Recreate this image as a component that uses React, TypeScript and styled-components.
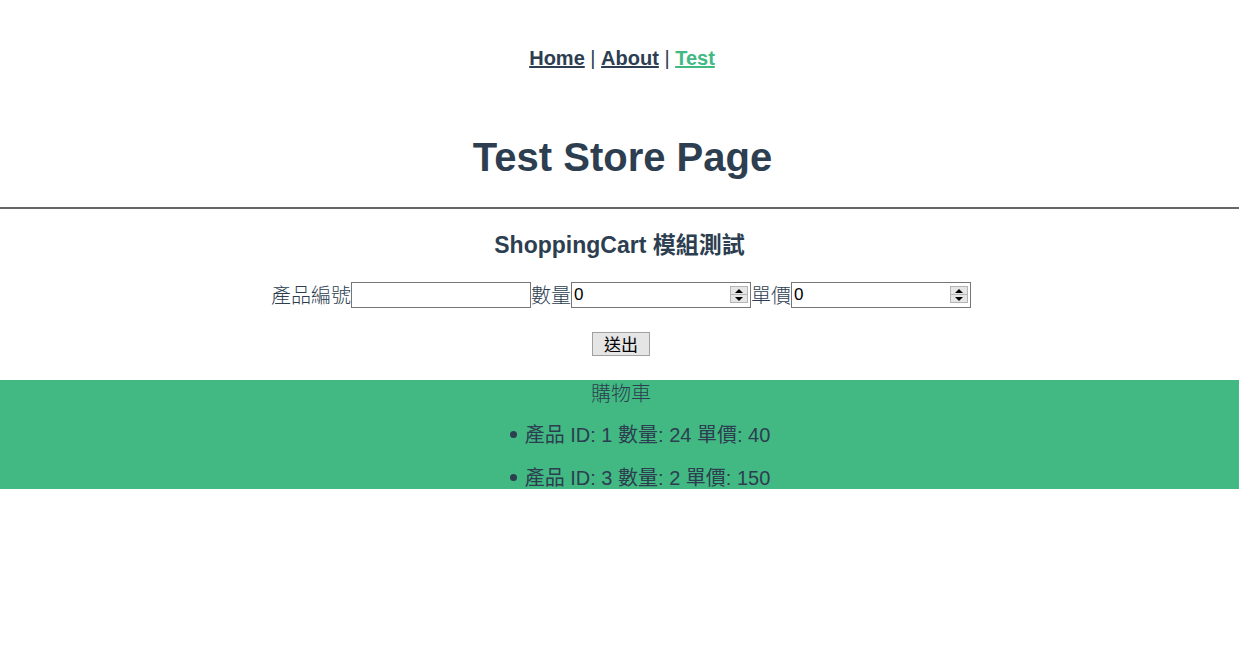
import React from "react";
import styled, { createGlobalStyle } from "styled-components";

const GlobalStyle = createGlobalStyle`
  body {
    margin: 0;
    background: #ffffff;
  }
`;

const AppWrapper = styled.div`
  font-family: Avenir, Helvetica, "Liberation Sans", Arial, "Noto Sans CJK TC", sans-serif;
  -webkit-font-smoothing: antialiased;
  text-align: center;
  color: #2c3e50;
  font-size: 20px;
`;

const Nav = styled.nav`
  padding: 47px 37px 37px 42px;
  line-height: 23px;
  font-size: 20px;
`;

const NavLink = styled.a<{ active?: boolean }>`
  font-weight: bold;
  color: ${(p) => (p.active ? "#42b983" : "#2c3e50")};
  text-decoration: underline;
  cursor: pointer;
`;

const Title = styled.h1`
  font-size: 40px;
  line-height: 46px;
  margin: 27px 0;
  padding-left: 6px;
`;

const Divider = styled.hr`
  margin: 9px 0 0;
  border: none;
  border-top: 2px solid #666666;
  height: 0;
`;

const SubTitle = styled.h3`
  font-size: 23px;
  line-height: 27px;
  margin: 23px 0;
`;

const FormRow = styled.div`
  display: flex;
  justify-content: center;
  align-items: center;
  height: 26px;
  line-height: 26px;
  padding-left: 3px;
`;

const Label = styled.label`
  font-size: 20px;
  font-family: "Noto Sans CJK TC", "Liberation Sans", sans-serif;
  font-weight: 300;
`;

const FieldBox = styled.span`
  position: relative;
  display: flex;
  width: 180px;
  height: 26px;
`;

const Field = styled.input`
  box-sizing: border-box;
  width: 180px;
  height: 26px;
  padding: 1px 2px;
  border: 1px solid #767676;
  border-radius: 0;
  font-family: "Liberation Sans", Arial, sans-serif;
  font-size: 17px;
  color: #000000;
  background: #ffffff;
  outline: none;
  -moz-appearance: textfield;

  &::-webkit-inner-spin-button,
  &::-webkit-outer-spin-button {
    -webkit-appearance: none;
    margin: 0;
  }
`;

const Spinner = styled.span`
  position: absolute;
  right: 3px;
  top: 4px;
  width: 18px;
  height: 17px;
  box-sizing: border-box;
  border: 1px solid #b5b5b5;
  background: #e6e6e6;
  display: flex;
  flex-direction: column;
`;

const SpinHalf = styled.span<{ down?: boolean }>`
  flex: 1;
  display: flex;
  align-items: center;
  justify-content: center;
  border-top: ${(p) => (p.down ? "1px solid #b5b5b5" : "none")};

  &::after {
    content: "";
    width: 0;
    height: 0;
    border-left: 4px solid transparent;
    border-right: 4px solid transparent;
    ${(p) =>
      p.down
        ? "border-top: 4px solid #000;"
        : "border-bottom: 4px solid #000;"}
  }
`;

const ButtonRow = styled.div`
  margin-top: 24px;
  display: flex;
  justify-content: center;
  padding-left: 3px;
`;

const SubmitButton = styled.button`
  box-sizing: border-box;
  width: 58px;
  height: 24px;
  padding: 0;
  background: #e5e5e5;
  border: 1px solid #a0a0a0;
  border-radius: 0;
  font-family: "Noto Sans CJK TC", sans-serif;
  font-size: 17px;
  line-height: 22px;
  color: #000000;
`;

const Cart = styled.div`
  margin-top: 24px;
  height: 109px;
  background: #42b983;
`;

const CartTitle = styled.div`
  font-family: "Noto Sans CJK TC", sans-serif;
  font-weight: 300;
  font-size: 20px;
  line-height: 26px;
  padding-left: 3px;
`;

const CartList = styled.ul`
  margin: 18px 0 0;
  padding: 0 0 0 41px;
  list-style: none;
`;

const CartItem = styled.li`
  line-height: 23px;
  margin-bottom: 20px;
  font-size: 20px;
  font-family: "Liberation Sans", Arial, "Noto Sans CJK TC", sans-serif;

  &::before {
    content: "";
    display: inline-block;
    width: 7px;
    height: 7px;
    border-radius: 50%;
    background: #2c3e50;
    margin: 0 8px 0 0;
    vertical-align: 4px;
  }
`;

const items = [
  { id: 1, qty: 24, price: 40 },
  { id: 3, qty: 2, price: 150 },
];

const NumberField: React.FC = () => (
  <FieldBox>
    <Field type="number" defaultValue={0} />
    <Spinner>
      <SpinHalf />
      <SpinHalf down />
    </Spinner>
  </FieldBox>
);

export default function App() {
  return (
    <AppWrapper>
      <GlobalStyle />
      <Nav>
        <NavLink>Home</NavLink> | <NavLink>About</NavLink> |{" "}
        <NavLink active>Test</NavLink>
      </Nav>
      <Title>Test Store Page</Title>
      <Divider />
      <SubTitle>ShoppingCart 模組測試</SubTitle>
      <FormRow>
        <Label>產品編號</Label>
        <Field type="text" />
        <Label>數量</Label>
        <NumberField />
        <Label>單價</Label>
        <NumberField />
      </FormRow>
      <ButtonRow>
        <SubmitButton>送出</SubmitButton>
      </ButtonRow>
      <Cart>
        <CartTitle>購物車</CartTitle>
        <CartList>
          {items.map((it) => (
            <CartItem key={it.id}>
              產品 ID: {it.id} 數量: {it.qty} 單價: {it.price}
            </CartItem>
          ))}
        </CartList>
      </Cart>
    </AppWrapper>
  );
}
